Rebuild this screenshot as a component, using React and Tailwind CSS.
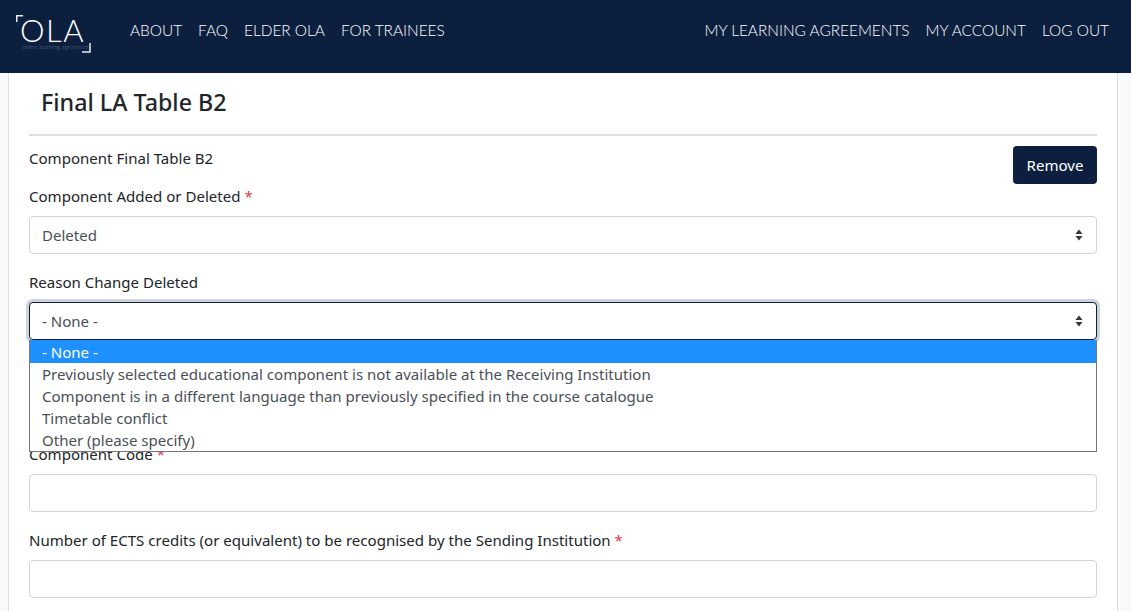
import React from "react";

const navLeft = ["ABOUT", "FAQ", "ELDER OLA", "FOR TRAINEES"];
const navRight = ["MY LEARNING AGREEMENTS", "MY ACCOUNT", "LOG OUT"];
const options = [
  "Previously selected educational component is not available at the Receiving Institution",
  "Component is in a different language than previously specified in the course catalogue",
  "Timetable conflict",
  "Other (please specify)",
];

const Carets = () => (
  <svg width="8" height="12" viewBox="0 0 8 12" className="text-[#343a40]">
    <path d="M4 0.5 L7.6 5 H0.4 Z M4 11.5 L0.4 7 H7.6 Z" fill="currentColor" />
  </svg>
);

const Required = () => <span className="text-[#dc3545]"> *</span>;

const Logo = () => (
  <div className="relative w-[75px] h-[38px] text-white">
    <svg width="75" height="38" viewBox="0 0 75 38" className="absolute inset-0">
      <path d="M0.75 7 V0.75 H7" fill="none" stroke="#e8ebf0" strokeWidth="1.5" />
      <path d="M74 28 V37 H66" fill="none" stroke="#e8ebf0" strokeWidth="1.5" />
    </svg>
    <span className="absolute left-[4px] top-[-4px] text-[31px] leading-[38px] font-light tracking-[1.5px]">OLA</span>
    <span className="absolute left-[6px] top-[28px] text-[6px] leading-[7px] text-[#6f7b93] whitespace-nowrap">online learning agreement</span>
  </div>
);

const SelectBox = ({ value, focused }) => (
  <div
    className={
      focused
        ? "h-[38px] flex items-center justify-between pl-[12px] pr-[13px] rounded-[4px] border border-[#0c1f3f] bg-white ring-[3px] ring-[#0c1f3f]/20 text-[#495057]"
        : "h-[38px] flex items-center justify-between pl-[12px] pr-[13px] rounded-[4px] border border-[#ced4da] bg-white text-[#495057]"
    }
  >
    <span>{value}</span>
    <Carets />
  </div>
);

export default function App() {
  return (
    <div className="h-[611px] overflow-hidden bg-[#f8f9fa] text-[#212529] text-[15.05px] leading-[24px] font-['Noto_Sans','Open_Sans',sans-serif]">
      {/* header */}
      <header className="h-[73px] bg-[#0c1f3f] flex items-center justify-between pl-[16px] pr-[22px] text-white font-['Lato',sans-serif] font-light">
        <div className="flex items-center">
          <div className="mt-[-5px] mr-[39px]">
            <Logo />
          </div>
          <nav className="flex gap-[16px] mt-[-14px]">
            {navLeft.map((item) => (
              <a key={item} className="text-[15.4px] whitespace-nowrap">{item}</a>
            ))}
          </nav>
        </div>
        <nav className="flex gap-[16px] mt-[-14px]">
          {navRight.map((item) => (
            <a key={item} className="text-[15.4px] whitespace-nowrap">{item}</a>
          ))}
        </nav>
      </header>

      {/* card */}
      <main className="mx-[8px] w-[1110px] bg-white border-x border-[#dfdfdf] px-[20px] pb-[40px]">
        <h2 className="pl-[12px] pt-[13px] pb-[16px] text-[23.25px] leading-[32px] font-medium border-b-2 border-[#dfdfdf]">
          Final LA Table B2
        </h2>

        <div className="flex justify-between items-start pt-[10px]">
          <span>Component Final Table B2</span>
          <button className="w-[84px] h-[38px] rounded-[4px] bg-[#0c1f3f] text-white">Remove</button>
        </div>

        <div>
          <label className="block mb-[8px]">
            Component Added or Deleted<Required />
          </label>
          <SelectBox value="Deleted" />
        </div>

        <div className="mt-[16px] relative">
          <label className="block mb-[8px]">Reason Change Deleted</label>
          <SelectBox value="- None -" focused />
          <ul className="absolute z-10 left-0 right-0 top-[70px] h-[112px] overflow-hidden bg-white border border-[#767676] border-t-0 text-[#495057] leading-[22px]">
            <li className="bg-[#1e90ff] text-white pl-[12px] h-[23px] leading-[25px]">- None -</li>
            {options.map((opt) => (
              <li key={opt} className="pl-[12px] whitespace-nowrap">{opt}</li>
            ))}
          </ul>
        </div>

        {/* hidden by the open list, only the labels below show */}
        <div className="mt-[102px]">
          <label className="block mb-[8px]">
            Component Code<Required />
          </label>
          <div className="h-[38px] rounded-[4px] border border-[#ced4da] bg-white" />
        </div>

        <div className="mt-[16px]">
          <label className="block mb-[8px]">
            Number of ECTS credits (or equivalent) to be recognised by the Sending Institution<Required />
          </label>
          <div className="h-[38px] rounded-[4px] border border-[#ced4da] bg-white" />
        </div>
      </main>
    </div>
  );
}
